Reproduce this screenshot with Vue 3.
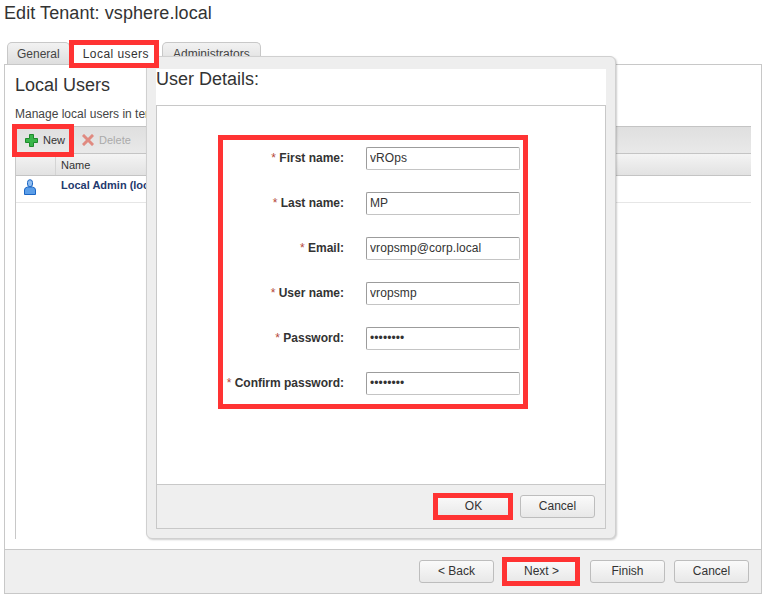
<script setup>
const fields = [
  { label: 'First name:', value: 'vROps', type: 'text' },
  { label: 'Last name:', value: 'MP', type: 'text' },
  { label: 'Email:', value: 'vropsmp@corp.local', type: 'text' },
  { label: 'User name:', value: 'vropsmp', type: 'text' },
  { label: 'Password:', value: 'password', type: 'password' },
  { label: 'Confirm password:', value: 'password', type: 'password' },
]
</script>

<template>
  <div class="page">
    <h1 class="title">Edit Tenant: vsphere.local</h1>
    <div class="tabs">
      <div class="tab">General</div>
      <div class="tab active">Local users<span class="mark mark-tab"></span></div>
      <div class="tab">Administrators</div>
    </div>
    <div class="panel">
      <div class="body">
        <h2 class="heading">Local Users</h2>
        <p class="desc">Manage local users in tenant</p>
        <div class="table">
          <div class="toolbar">
            <div class="tool new">
              <svg width="13" height="13" viewBox="0 0 13 13"><path d="M4.5 .5h4v4h4v4h-4v4h-4v-4h-4v-4h4z" fill="#39b54a" stroke="#1f8a2c"/></svg>
              <span>New</span>
              <span class="mark mark-new"></span>
            </div>
            <div class="tool disabled">
              <svg width="12" height="12" viewBox="0 0 12 12"><path d="M2 2l8 8M10 2l-8 8" stroke="#e08a80" stroke-width="3" stroke-linecap="square"/></svg>
              <span>Delete</span>
            </div>
          </div>
          <div class="thead">
            <div class="th-icon"></div>
            <div class="th-name">Name</div>
          </div>
          <div class="row">
            <svg class="user" width="12" height="16" viewBox="0 0 12 16">
              <path d="M3.5 3.5a2.5 2.8 0 0 1 5 0v1.500a2.500 2.800 0 0 1-5 0z" fill="#8fbdf0" stroke="#1c66c4"/>
              <path d="M.5 15.500v-4.500q0-2.500 3-3h5q3 .5 3 3v4.500z" fill="#5b9ee8" stroke="#1c66c4"/>
            </svg>
            <span class="row-name">Local Admin (local)</span>
          </div>
        </div>
      </div>
      <div class="footer">
        <button class="btn">&lt; Back</button>
        <button class="btn next">Next &gt;<span class="mark mark-next"></span></button>
        <button class="btn">Finish</button>
        <button class="btn last">Cancel</button>
      </div>
    </div>

    <div class="modal">
      <div class="modal-title">User Details:</div>
      <div class="modal-content">
        <div class="form">
          <div v-for="f in fields" :key="f.label" class="field">
            <label class="label"><span class="req">*</span> {{ f.label }}</label>
            <input class="input" :type="f.type" :value="f.value" />
          </div>
          <span class="mark mark-form"></span>
        </div>
      </div>
      <div class="modal-footer">
        <button class="btn ok">OK<span class="mark mark-ok"></span></button>
        <button class="btn">Cancel</button>
      </div>
    </div>
  </div>
</template>

<style scoped>
.page {
  position: relative;
  width: 766px;
  height: 598px;
  overflow: hidden;
  background: #fff;
  font-family: "Liberation Sans", Arial, sans-serif;
  font-size: 12px;
  color: #333;
}
.title {
  margin: 0;
  height: 42px;
  padding: 3px 0 0 4px;
  box-sizing: border-box;
  font-size: 18px;
  line-height: 21px;
  font-weight: 400;
  letter-spacing: .08px;
  color: #333;
}
.tabs {
  display: flex;
  gap: 2px;
  height: 22px;
  padding-left: 7px;
}
.tab {
  position: relative;
  height: 22px;
  box-sizing: border-box;
  padding: 4px 9px 0;
  line-height: 14px;
  border: 1px solid #c8c8c8;
  border-bottom: 0;
  border-radius: 5px 5px 0 0;
  background: linear-gradient(#f2f2f2, #dedede);
  color: #444;
  font-size: 12px;
}
.tab:last-child {
  padding: 4px 10px 0;
}
.tab.active {
  background: #fff;
  border-color: #fff;
  color: #333;
  z-index: 1;
  height: 23px;
  padding: 4px 9px 0 13px;
  letter-spacing: .45px;
  margin-left: -3px;
  margin-right: 1px;
}
.panel {
  margin-left: 4px;
  width: 758px;
  height: 530px;
  box-sizing: border-box;
  border: 1px solid #c8c8c8;
  display: flex;
  flex-direction: column;
}
.body {
  flex: 1;
  padding: 10px 10px 0;
  min-height: 0;
  display: flex;
  flex-direction: column;
}
.heading {
  margin: 0;
  height: 32px;
  font-size: 18px;
  line-height: 20px;
  font-weight: 400;
  color: #333;
}
.desc {
  margin: 0;
  height: 19px;
  line-height: 14px;
  font-size: 12px;
  color: #444;
}
.table {
  flex: 1;
  border-left: 1px solid #c8c8c8;
  width: 735px;
  margin-bottom: 10px;
}
.toolbar {
  display: flex;
  align-items: center;
  gap: 17px;
  height: 28px;
  box-sizing: border-box;
  border-top: 1px solid #c4c4c4;
  border-bottom: 1px solid #c4c4c4;
  background: linear-gradient(#dfdfdf, #e9e9e9);
  padding-left: 9px;
}
.tool {
  display: flex;
  align-items: center;
  gap: 5px;
  font-size: 11px;
  position: relative;
}
.disabled {
  color: #aaa;
}
.thead {
  display: flex;
  height: 22px;
  box-sizing: border-box;
  border-bottom: 1px solid #c4c4c4;
  background: linear-gradient(#f4f4f4, #e2e2e2);
  font-size: 11px;
  line-height: 22px;
}
.th-icon {
  width: 39px;
  border-right: 1px solid #d4d4d4;
}
.th-name {
  padding-left: 5px;
  color: #333;
}
.row {
  display: flex;
  height: 27px;
  box-sizing: border-box;
  border-bottom: 1px solid #e6e6e6;
  padding: 3px 0 0 8px;
  gap: 25px;
  font-size: 11px;
}
.user {
  flex: none;
}
.row-name {
  font-weight: 700;
  color: #1f3a6e;
  line-height: 13px;
}
.footer {
  height: 44px;
  box-sizing: border-box;
  border-top: 1px solid #c8c8c8;
  background: #efefef;
  display: flex;
  justify-content: flex-end;
  align-items: center;
  gap: 8px;
  padding: 0 12px 1px 0;
}
.btn {
  position: relative;
  width: 75px;
  height: 23px;
  padding: 0;
  box-sizing: border-box;
  border: 1px solid #bdbdbd;
  border-radius: 3px;
  background: linear-gradient(#fafafa, #e8e8e8);
  font-family: inherit;
  font-size: 12px;
  color: #333;
}
.next {
  margin: 0 3px 0 2px;
}
.last {
  margin-left: 1px;
}
.modal {
  position: absolute;
  left: 146px;
  top: 56px;
  width: 470px;
  height: 483px;
  box-sizing: border-box;
  background: #eee;
  border: 1px solid #d0d0d0;
  border-radius: 6px;
  box-shadow: 1px 1px 2px rgba(0, 0, 0, .2);
  padding: 12px 9px 9px;
  display: flex;
  flex-direction: column;
}
.modal-title {
  height: 36px;
  flex: none;
  background: #fff;
  font-size: 18px;
  line-height: 20px;
  color: #333;
}
.modal-content {
  flex: 1;
  background: #fff;
  border: 1px solid #c8c8c8;
  border-bottom: 0;
  padding: 41px 0 0 62px;
}
.form {
  position: relative;
  width: 301px;
  display: flex;
  flex-direction: column;
  gap: 22px;
}
.field {
  display: flex;
  align-items: center;
  height: 23px;
  gap: 22px;
}
.label {
  width: 125px;
  flex: none;
  text-align: right;
  font-weight: 700;
  font-size: 12px;
  white-space: nowrap;
  color: #333;
  padding-bottom: 2px;
}
.req {
  color: #b5483a;
  font-weight: 400;
}
.input {
  width: 154px;
  height: 23px;
  box-sizing: border-box;
  padding: 0 2px 2px 3px;
  border: 1px solid #c4c4c4;
  border-top-color: #9c9c9c;
  border-left-color: #9c9c9c;
  border-radius: 2px;
  background: #fff;
  font-family: inherit;
  font-size: 12px;
  letter-spacing: .1px;
  color: #333;
  outline: none;
}
.modal-footer {
  height: 45px;
  flex: none;
  box-sizing: border-box;
  border: 1px solid #c8c8c8;
  background: #efefef;
  display: flex;
  justify-content: flex-end;
  align-items: center;
  gap: 9px;
  padding-right: 10px;
}
.modal-footer .btn {
  padding-bottom: 2px;
}
.mark {
  position: absolute;
  box-sizing: border-box;
  border: 5px solid #ff3333;
  pointer-events: none;
  z-index: 3;
}
.mark-tab { left: -1px; top: -3px; width: 90px; height: 28px; }
.mark-new { left: -13px; top: -10px; width: 62px; height: 33px; }
.mark-form { left: -1px; top: -12px; width: 310px; height: 274px; }
.mark-ok { left: -4px; top: -3px; width: 80px; height: 27px; }
.mark-next { left: -3px; top: -4px; width: 78px; height: 29px; }
</style>
